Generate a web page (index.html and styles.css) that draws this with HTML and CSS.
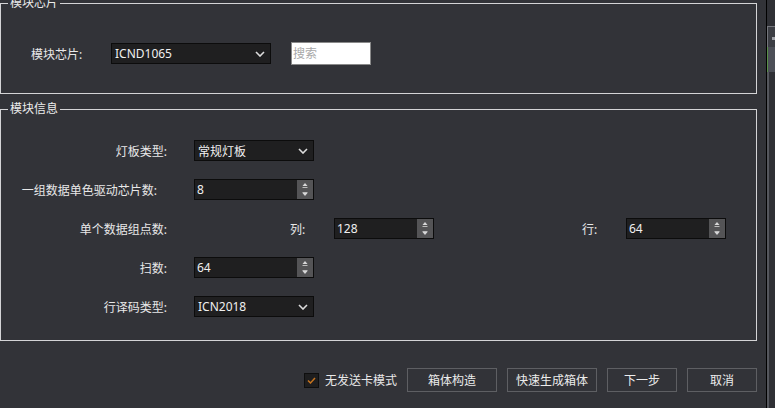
FILE: index.html
```html
<!DOCTYPE html>
<html lang="zh-CN">
<head>
<meta charset="utf-8">
<title>模块芯片</title>
<link rel="stylesheet" href="styles.css">
</head>
<body>
<div class="app">
  <div class="main">
    <section class="group g1">
      <span class="legend">模块芯片</span>
      <div class="chip-row">
        <span class="lbl-chip">模块芯片:</span>
        <div class="combo w160">
          <span class="val">ICND1065</span>
          <svg class="chev" width="10" height="6" viewBox="0 0 10 6"><path d="M1 1 L5 5 L9 1" fill="none" stroke="#dcdcdc" stroke-width="1.6"/></svg>
        </div>
        <input class="search" type="text" placeholder="搜索">
      </div>
    </section>

    <section class="group g2">
      <span class="legend">模块信息</span>
      <div class="rows">
        <div class="frow">
          <span class="lbl">灯板类型:</span>
          <div class="combo w120">
            <span class="val">常规灯板</span>
            <svg class="chev" width="10" height="6" viewBox="0 0 10 6"><path d="M1 1 L5 5 L9 1" fill="none" stroke="#dcdcdc" stroke-width="1.6"/></svg>
          </div>
        </div>
        <div class="frow">
          <span class="lbl lbl-long">一组数据单色驱动芯片数:</span>
          <div class="spin w120">
            <span class="val">8</span>
            <div class="spin-btns">
              <svg width="16" height="19" viewBox="0 0 16 19"><path d="M5.5 6 L8 3 L10.5 6 Z" fill="#d8d8d8"/><rect x="5.5" y="7" width="5" height="1" fill="#bcbcbc"/><rect x="5.5" y="12" width="5" height="1" fill="#bcbcbc"/><path d="M5.5 13 L10.5 13 L8 16 Z" fill="#d8d8d8"/></svg>
            </div>
          </div>
        </div>
        <div class="frow">
          <span class="lbl">单个数据组点数:</span>
          <div class="pair">
            <span class="lbl-sm">列:</span>
            <div class="spin w100">
              <span class="val">128</span>
              <div class="spin-btns">
                <svg width="16" height="19" viewBox="0 0 16 19"><path d="M5.5 6 L8 3 L10.5 6 Z" fill="#d8d8d8"/><rect x="5.5" y="7" width="5" height="1" fill="#bcbcbc"/><rect x="5.5" y="12" width="5" height="1" fill="#bcbcbc"/><path d="M5.5 13 L10.5 13 L8 16 Z" fill="#d8d8d8"/></svg>
              </div>
            </div>
            <span class="lbl-sm row-lbl">行:</span>
            <div class="spin w100">
              <span class="val">64</span>
              <div class="spin-btns">
                <svg width="16" height="19" viewBox="0 0 16 19"><path d="M5.5 6 L8 3 L10.5 6 Z" fill="#d8d8d8"/><rect x="5.5" y="7" width="5" height="1" fill="#bcbcbc"/><rect x="5.5" y="12" width="5" height="1" fill="#bcbcbc"/><path d="M5.5 13 L10.5 13 L8 16 Z" fill="#d8d8d8"/></svg>
              </div>
            </div>
          </div>
        </div>
        <div class="frow">
          <span class="lbl">扫数:</span>
          <div class="spin w120">
            <span class="val">64</span>
            <div class="spin-btns">
              <svg width="16" height="19" viewBox="0 0 16 19"><path d="M5.5 6 L8 3 L10.5 6 Z" fill="#d8d8d8"/><rect x="5.5" y="7" width="5" height="1" fill="#bcbcbc"/><rect x="5.5" y="12" width="5" height="1" fill="#bcbcbc"/><path d="M5.5 13 L10.5 13 L8 16 Z" fill="#d8d8d8"/></svg>
            </div>
          </div>
        </div>
        <div class="frow">
          <span class="lbl">行译码类型:</span>
          <div class="combo w120">
            <span class="val">ICN2018</span>
            <svg class="chev" width="10" height="6" viewBox="0 0 10 6"><path d="M1 1 L5 5 L9 1" fill="none" stroke="#dcdcdc" stroke-width="1.6"/></svg>
          </div>
        </div>
      </div>
    </section>

    <div class="footer">
      <label class="check">
        <span class="box"><svg width="13" height="13" viewBox="0 0 13 13"><path d="M3 6.5 L5.5 9 L10 4" fill="none" stroke="#c8741e" stroke-width="1.5"/></svg></span>
        <span>无发送卡模式</span>
      </label>
      <button class="btn w90">箱体构造</button>
      <button class="btn w90">快速生成箱体</button>
      <button class="btn w70">下一步</button>
      <button class="btn w70">取消</button>
    </div>
  </div>
  <div class="edge">
    <div class="edge-top"></div>
    <div class="edge-panel"><span class="edge-dot"></span></div>
    <div class="edge-hl"></div>
    <div class="edge-rest"></div>
  </div>
</div>
</body>
</html>
```

FILE: styles.css
```css
* { box-sizing: border-box; }
html, body {
  margin: 0;
  padding: 0;
  width: 775px;
  height: 408px;
  overflow: hidden;
  background: #323338;
  font-family: "Noto Sans", "Noto Sans CJK SC", sans-serif;
  font-size: 12px;
  color: #e8e8e8;
}
.app {
  display: flex;
  width: 775px;
  height: 408px;
}
.main {
  width: 766px;
  padding: 3px 9px 0 0;
  display: flex;
  flex-direction: column;
}
.group {
  position: relative;
  border: 1px solid #d4d4d6;
  width: 757px;
}
.legend {
  position: absolute;
  top: -9px;
  left: 7px;
  padding: 0 2px;
  line-height: 16px;
  background: #323338;
  color: #ececec;
}
.g1 {
  height: 91px;
  padding: 38px 0 0 30px;
}
.chip-row {
  display: flex;
  align-items: center;
  height: 23px;
}
.lbl-chip {
  width: 80px;
}
.combo, .spin {
  position: relative;
  display: flex;
  align-items: center;
  height: 21px;
  background: #1f1f20;
  border: 1px solid #0c0c0c;
  color: #f0f0f0;
}
.combo .val { padding-left: 3px; flex: 1; }
.chev { margin-right: 5px; }
.w160 { width: 160px; }
.w120 { width: 120px; }
.w100 { width: 100px; }
.w90 { width: 90px; }
.w70 { width: 70px; }
.search {
  margin-left: 20px;
  width: 80px;
  height: 23px;
  border: 1px solid #8a8a8a;
  background: #ffffff;
  padding: 0 0 0 1px;
  font: inherit;
  color: #333;
  outline: none;
}
.search::placeholder { color: #a8a8a8; }

.g2 {
  margin-top: 15px;
  height: 232px;
  padding-top: 30px;
}
.rows {
  display: flex;
  flex-direction: column;
  gap: 18px;
}
.frow {
  display: flex;
  align-items: center;
  height: 21px;
}
.lbl {
  width: 166px;
  text-align: right;
  margin-right: 27px;
  white-space: nowrap;
}
.lbl-long { padding-right: 10px; }
.spin .val { padding-left: 2px; flex: 1; }
.spin-btns {
  width: 16px;
  height: 19px;
  background: #545456;
  display: flex;
}
.pair {
  display: flex;
  align-items: center;
  padding-left: 96px;
}
.lbl-sm { width: 44px; }
.row-lbl { margin-left: 148px; }

.footer {
  margin-top: 27px;
  display: flex;
  align-items: center;
  justify-content: flex-end;
  gap: 10px;
  height: 24px;
}
.check {
  display: flex;
  align-items: center;
  gap: 6px;
}
.box {
  width: 15px;
  height: 15px;
  background: #1e1e1f;
  border: 1px solid #0e0e0e;
  display: flex;
  align-items: center;
  justify-content: center;
}
.btn {
  height: 24px;
  border: 1px solid #5e5f63;
  background: transparent;
  color: #ececec;
  font: inherit;
  padding: 0;
}

.edge {
  width: 9px;
  border-left: 1px solid #000;
  display: flex;
  flex-direction: column;
}
.edge-top { height: 26px; background: #2f3035; }
.edge-panel {
  position: relative;
  height: 21px;
  border-top: 1px solid #74767c;
  border-left: 1px solid #74767c;
  background: #3c3e44;
}
.edge-dot {
  position: absolute;
  right: 0;
  top: 10px;
  width: 3px;
  height: 3px;
  background: #a0a2a8;
}
.edge-hl {
  height: 25px;
  background: #4c4f57;
  border-left: 1px solid #5a8f4a;
}
.edge-rest {
  flex: 1;
  background: #2f3035;
  border-left: 2px solid #55575d;
}
```
